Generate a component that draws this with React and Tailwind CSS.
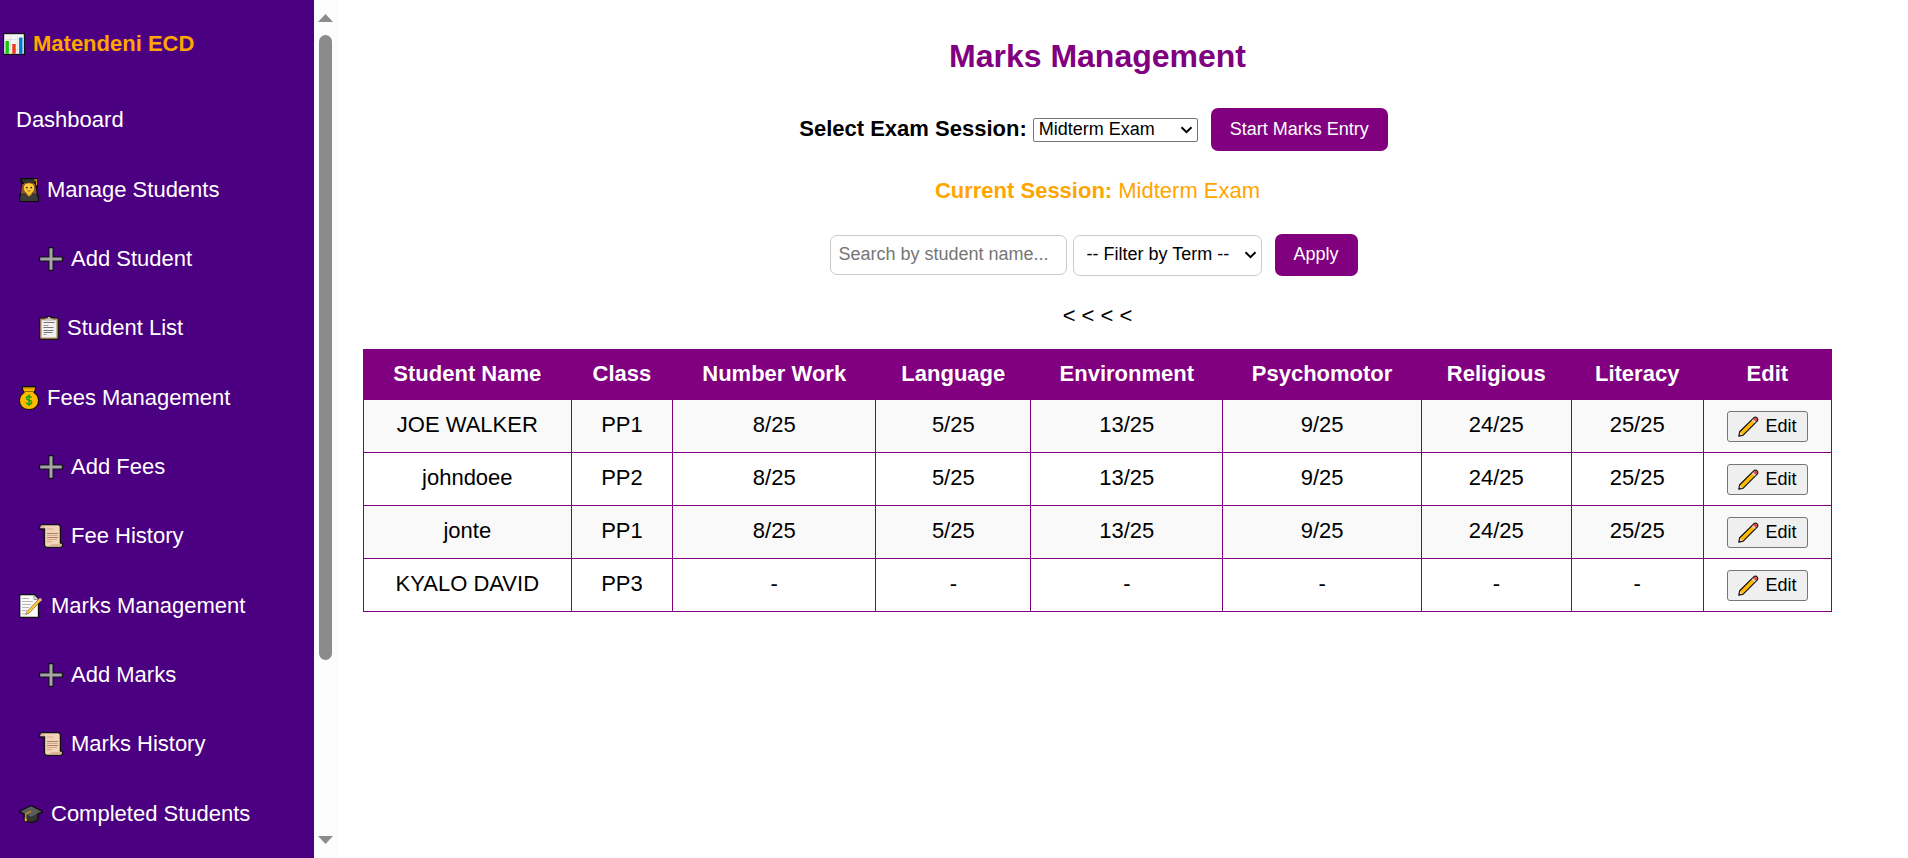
import React from "react";

function ChartIcon() {
  return (
    <svg viewBox="0 0 22 22" className="ml-[3px] mr-2 h-[22px] w-[22px] shrink-0" aria-hidden="true">
      <rect width="22" height="22" fill="#111" />
      <rect x="1.2" y="1.2" width="19.6" height="19.6" fill="#f4f4f4" />
      <path d="M1 6.5h20M1 11.500h20M1 16.500h20M7.500 1v20M14.500 1v20" stroke="#dedede" strokeWidth="0.8" />
      <rect x="2.500" y="8" width="3.400" height="12.800" fill="#16c60c" />
      <rect x="9.300" y="11" width="3.400" height="9.800" fill="#f03a17" />
      <rect x="16.100" y="4.500" width="3.400" height="16.300" fill="#0078d7" />
    </svg>
  );
}

function StudentIcon() {
  return (
    <svg viewBox="0 0 20 24" className="ml-[3px] mr-2 h-6 w-5 shrink-0" aria-hidden="true">
      <path d="M1 0h18v8l-.6 4V16l1.600 1.500V24H0V17l1.400-2.500L2 7V4L1 3.500z" fill="#0b0b0b" />
      <path d="M3.500 6C2.500 10 2.400 13.500 2 15.800h15.600C17.200 13 16.800 9 16 6z" fill="#8e562e" />
      <path d="M1.200 23V19c0-2.500 3-3.500 5.500-3.500h6.600c2.500 0 5.500 1 5.500 3.500v4z" fill="#3a3a3a" />
      <path d="M7.500 14.500h5.200v1.700L10.100 18.500 7.500 16.200z" fill="#f0a91e" />
      <ellipse cx="10" cy="10" rx="5.200" ry="5.600" fill="#ffc83d" />
      <path d="M4.600 8c1-2 3-2.800 5.400-2.800S14.600 6 15.500 8l-.8-3.500H5.200z" fill="#8e562e" />
      <path d="M2 1.200h16L15.500 4.600h-11z" fill="#333" />
      <path d="M15.200 1.800h2.300v5.500" fill="none" stroke="#d9920f" strokeWidth="1.300" />
      <circle cx="7.800" cy="9.600" r=".9" fill="#222" />
      <circle cx="12.300" cy="9.600" r=".9" fill="#222" />
      <path d="M8.300 12.600q1.700 1.100 3.400 0" stroke="#8a5a10" strokeWidth=".8" fill="none" />
    </svg>
  );
}

function PlusIcon() {
  return (
    <svg viewBox="0 0 24 24" className="ml-[3px] mr-2 size-6 shrink-0" aria-hidden="true">
      <path d="M9.500 0h5v9.500H24v5h-9.500V24h-5v-9.500H0v-5h9.500z" fill="#101010" />
      <path d="M10.500 1.200h3v9.300h9.300v3h-9.300v9.300h-3v-9.300H1.200v-3h9.300z" fill="#a6a6a6" />
    </svg>
  );
}

function ClipboardIcon() {
  return (
    <svg viewBox="0 0 20 24" className="ml-[3px] mr-2 h-6 w-5 shrink-0" aria-hidden="true">
      <path d="M1.500 1.500h5.300L8 0h4l1.200 1.500h5.300L20 3v19.500L18.500 24h-17L0 22.500V3z" fill="#151515" />
      <rect x="1.200" y="2.400" width="17.600" height="20.400" rx="1" fill="#b98d66" />
      <rect x="2.600" y="4.300" width="14.800" height="17.200" fill="#f2f2f2" />
      <path d="M6 4.800V2.700h2.200C8.500 1.400 9 1 10 1s1.500.4 1.800 1.700H14v2.100z" fill="#c8c2ba" />
      <path d="M4.500 6.500h11M4.500 11.500h10M4.500 14.500h10M4.500 16.500h9" stroke="#777" strokeWidth="1" />
      <path d="M4.500 9.500h5M4.500 18.500h3" stroke="#999" strokeWidth="1" />
    </svg>
  );
}

function MoneyIcon() {
  return (
    <svg viewBox="0 0 20 24" className="ml-[3px] mr-2 h-6 w-5 shrink-0" aria-hidden="true">
      <path d="M3.600.6h12.800v2.900L15 6.500c3 2 4.600 4.800 4.600 8.200 0 5.400-4 8.900-9.600 8.900S.4 20.100.4 14.700C.4 11.300 2 8.500 5 6.500L3.600 3.500z" fill="#ffb900" stroke="#111" strokeWidth="1.200" />
      <path d="M4.500 1.800h11M5.200 5.500h9.600" stroke="#9a6700" strokeWidth="1.100" />
      <path d="M4.800 2.700h10.500" stroke="#e09a00" strokeWidth="1.200" />
      <path d="M12.500 11.700c-.5-1.100-1.400-1.500-2.500-1.500-1.600 0-2.600.8-2.600 2 0 2.700 5.300 1.300 5.300 4 0 1.200-1.100 2-2.700 2-1.300 0-2.300-.5-2.800-1.600M10 8.500v11.400" fill="none" stroke="#13a10e" strokeWidth="1.400" />
    </svg>
  );
}

function ScrollIcon() {
  return (
    <svg viewBox="0 0 24 24" className="ml-[3px] mr-2 size-6 shrink-0" aria-hidden="true">
      <path d="M3 .7h16.500c1.400.5 1.900 1.400 1.900 2.800v15.600h2v2.500c-.4 1.200-1 1.700-2.200 1.700H7.500c-1.500-.4-2-1.200-2-2.600V5H.6V3C1 1.500 1.600.9 3 .7z" fill="#f3d2ba" stroke="#111" strokeWidth="1.300" />
      <path d="M1.500 3.800h4V2.200H3c-.8.100-1.300.6-1.500 1.600zM10.500 22.500c.9-.6 1-1.300 1-2.200h11v1c-.2.800-.6 1.200-1.500 1.200z" fill="#d9ae90" />
      <path d="M8 5h6M8 11.500h11M8 15.500h10M8 17.500h5" stroke="#d3a98b" strokeWidth="1.100" />
      <path d="M8 9.500h11M8 13.500h11" stroke="#a98265" strokeWidth="1" />
    </svg>
  );
}

function MemoIcon() {
  return (
    <svg viewBox="0 0 24 24" className="ml-[3px] mr-2 size-6 shrink-0" aria-hidden="true">
      <path d="M.7.700h14.600l4.200 4.200v18.400H.7z" fill="#fafafa" stroke="#111" strokeWidth="1.300" />
      <path d="M15 1v4.500h4.300" fill="#ddd" stroke="#888" strokeWidth=".8" />
      <path d="M3 4.500h7M3 7.500h11M3 10.500h9M3 13.500h7M3 16.500h5M3 20h4" stroke="#b5b5b5" strokeWidth="1" />
      <path d="M7 20.500l1-3L20.600 4.300c1-.6 2.500.7 1.900 1.900L10 19.300z" fill="#ffca3a" stroke="#6b5320" strokeWidth=".6" />
      <path d="M19.400 5.500l1.200-1.200c1-.6 2.500.7 1.900 1.900l-1.200 1.300z" fill="#e8a0a0" />
    </svg>
  );
}

function CapIcon() {
  return (
    <svg viewBox="0 0 24 24" className="ml-[3px] mr-2 size-6 shrink-0" aria-hidden="true">
      <path d="M12 3L0 8.800v1.600l4.400 2.400v5C6.500 20 9 21 12 21s5.500-1 7.600-3.200v-5L24 10.400V8.800z" fill="#0d0d0d" />
      <path d="M5.600 12v5.300C7.500 19 9.500 19.800 12 19.800s4.500-.8 6.400-2.500V12z" fill="#343434" />
      <path d="M12 4.300L1.500 9.400 12 14.800l10.500-5.400z" fill="#5c5c5c" />
      <path d="M12 9.300l-5.300 2.500v7" fill="none" stroke="#e09a10" strokeWidth="1.200" />
      <path d="M5.700 16.500h2v3l-2-.8z" fill="#f7b32b" />
    </svg>
  );
}

function PencilIcon() {
  return (
    <svg viewBox="0 0 21 21" className="size-[21px] shrink-0" aria-hidden="true">
      <path d="M.8 20.200l.9-4.400L16 1.600c2.200-1.500 4.700 1 3.400 3.200L5.200 19.100z" fill="#ffb900" stroke="#111" strokeWidth="1.200" strokeLinejoin="round" />
      <path d="M14.900 3.400l1.500-1.300c1.700-1 3.500.9 2.500 2.500l-1.400 1.500z" fill="#e74856" />
      <path d="M13.900 4.400l1.200-1.200 2.700 2.700-1.200 1.200z" fill="#d8d8d8" />
      <path d="M1.400 19.600l.8-3.400 2.600 2.500z" fill="#f0cfae" />
      <path d="M.8 20.200l.4-1.900 1.500 1.500z" fill="#111" />
    </svg>
  );
}

function Chevron() {
  return (
    <svg viewBox="0 0 13 8" className="pointer-events-none absolute right-[5px] top-1/2 h-2 w-[13px] -translate-y-1/2" aria-hidden="true">
      <path d="M1.500 1.200l5 5 5-5" fill="none" stroke="#000" strokeWidth="2" />
    </svg>
  );
}

const menu = [
  [{ label: "Dashboard" }],
  [
    { label: "Manage Students", Icon: StudentIcon },
    { label: "Add Student", Icon: PlusIcon, child: true },
    { label: "Student List", Icon: ClipboardIcon, child: true },
  ],
  [
    { label: "Fees Management", Icon: MoneyIcon },
    { label: "Add Fees", Icon: PlusIcon, child: true },
    { label: "Fee History", Icon: ScrollIcon, child: true },
  ],
  [
    { label: "Marks Management", Icon: MemoIcon },
    { label: "Add Marks", Icon: PlusIcon, child: true },
    { label: "Marks History", Icon: ScrollIcon, child: true },
  ],
  [{ label: "Completed Students", Icon: CapIcon }],
];

const columns = [
  "Student Name",
  "Class",
  "Number Work",
  "Language",
  "Environment",
  "Psychomotor",
  "Religious",
  "Literacy",
  "Edit",
];

const rows = [
  ["JOE WALKER", "PP1", "8/25", "5/25", "13/25", "9/25", "24/25", "25/25"],
  ["johndoee", "PP2", "8/25", "5/25", "13/25", "9/25", "24/25", "25/25"],
  ["jonte", "PP1", "8/25", "5/25", "13/25", "9/25", "24/25", "25/25"],
  ["KYALO DAVID", "PP3", "-", "-", "-", "-", "-", "-"],
];

function Sidebar() {
  return (
    <aside className="flex h-screen shrink-0">
      <div className="w-[314px] overflow-hidden bg-[#4b0082]">
        <h2 className="mb-[29px] mt-8 flex h-6 items-center text-[22px] font-bold leading-6 text-[#ffa500]">
          <ChartIcon />
          Matendeni ECD
        </h2>
        <nav className="flex flex-col gap-px">
          {menu.map((group) => (
            <ul key={group[0].label}>
              {group.map(({ label, Icon, child }) => (
                <li key={label}>
                  <a
                    href="#"
                    className={`flex h-[69px] items-center text-[22px] leading-6 text-white ${child ? "pl-9" : "pl-4"}`}
                  >
                    {Icon && <Icon />}
                    {label}
                  </a>
                </li>
              ))}
            </ul>
          ))}
        </nav>
      </div>
      <div className="flex w-[23px] flex-col items-center bg-[#fcfcfc] py-[14px]" aria-hidden="true">
        <svg viewBox="0 0 15 8" className="h-2 w-[15px] shrink-0">
          <path d="M7.500 0L15 8H0z" fill="#8b8b8b" />
        </svg>
        <div className="flex w-full flex-1 flex-col items-center pb-5 pt-[13px]">
          <div className="h-4/5 w-[13px] rounded-full bg-[#8b8b8b]" />
        </div>
        <svg viewBox="0 0 15 8" className="h-2 w-[15px] shrink-0">
          <path d="M0 0h15L7.500 8z" fill="#8b8b8b" />
        </svg>
      </div>
    </aside>
  );
}

export default function App() {
  return (
    <div className="flex h-screen overflow-hidden bg-white font-['Liberation_Sans',Arial,sans-serif] text-[22px] leading-6 text-black">
      <Sidebar />
      <main className="min-w-0 flex-1 pl-[26px] pr-[76px] pt-[38px] text-center">
        <h1 className="text-[32px] font-bold leading-9 text-[#800080]">Marks Management</h1>

        <form className="mt-[34px] flex items-center justify-center pr-2" onSubmit={(e) => e.preventDefault()}>
          <label htmlFor="session" className="mr-1.5 pb-0.5 font-bold">
            Select Exam Session:
          </label>
          <div className="relative mr-[13px]">
            <select
              id="session"
              className="block h-6 w-[165px] appearance-none rounded-[2px] border border-[#767676] bg-white pb-0.5 pl-[5px] text-[18px] leading-5"
            >
              <option>Midterm Exam</option>
            </select>
            <Chevron />
          </div>
          <button className="h-[43px] w-[177px] rounded-[7px] bg-[#800080] pb-0.5 text-[18px] leading-5 text-white">
            Start Marks Entry
          </button>
        </form>

        <p className="mt-7 text-[#ffa500]">
          <strong>Current Session:</strong> Midterm Exam
        </p>

        <form className="mt-[31px] flex items-center justify-center pr-2" onSubmit={(e) => e.preventDefault()}>
          <input
            type="text"
            aria-label="Search by student name"
            placeholder="Search by student name..."
            className="mr-1.5 h-10 w-[237px] rounded-[7px] border border-[#cccccc] px-2 pb-0.5 text-[18px] leading-5 placeholder:text-[#757575]"
          />
          <div className="relative mr-[13px]">
            <select
              aria-label="Filter by Term"
              className="block h-[41px] w-[189px] appearance-none rounded-[7px] border border-[#cccccc] bg-white pb-0.5 pl-[13px] text-[18px] leading-5"
            >
              <option>-- Filter by Term --</option>
            </select>
            <Chevron />
          </div>
          <button className="h-[42px] w-[83px] rounded-[7px] bg-[#800080] pb-0.5 text-[18px] leading-5 text-white">
            Apply
          </button>
        </form>

        <p className="mt-7">&lt; &lt; &lt; &lt;</p>

        <table className="mt-[21px] w-full border-collapse border border-[#800080]">
          <thead>
            <tr className="h-[50px] bg-[#800080] text-white">
              {columns.map((c) => (
                <th key={c} className="border border-[#800080] px-[13px] pb-0.5 font-bold">
                  {c}
                </th>
              ))}
            </tr>
          </thead>
          <tbody>
            {rows.map((r) => (
              <tr key={r[0]} className="h-[53px] odd:bg-[#f9f9f9]">
                {r.map((v, i) => (
                  <td key={columns[i]} className="border border-[#800080] px-[13px] pb-[3px]">
                    {v}
                  </td>
                ))}
                <td className="border border-[#800080] px-[13px]">
                  <button className="mx-auto flex h-[31px] w-[81px] items-center justify-center gap-1.5 rounded-[3px] border border-[#767676] bg-[#efefef] text-[18px] leading-5">
                    <PencilIcon />
                    Edit
                  </button>
                </td>
              </tr>
            ))}
          </tbody>
        </table>
      </main>
    </div>
  );
}
